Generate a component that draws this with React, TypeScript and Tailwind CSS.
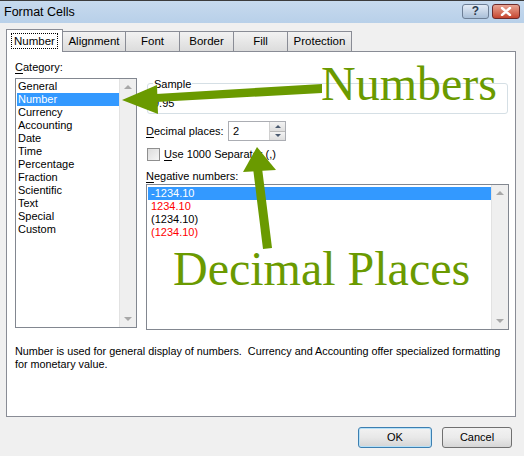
import React from "react";

const categories = [
  "General",
  "Number",
  "Currency",
  "Accounting",
  "Date",
  "Time",
  "Percentage",
  "Fraction",
  "Scientific",
  "Text",
  "Special",
  "Custom",
];

const tabs = ["Number", "Alignment", "Font", "Border", "Fill", "Protection"];
const tabWidths = ["w-[57px]", "w-[64px]", "w-[55px]", "w-[55px]", "w-[55px]", "w-[65px]"];

const negatives = [
  { text: "-1234.10", cls: "bg-[#3399ff] text-white" },
  { text: "1234.10", cls: "text-[#ff0000]" },
  { text: "(1234.10)", cls: "text-black" },
  { text: "(1234.10)", cls: "text-[#ff0000]" },
];

function ScrollBar() {
  return (
    <div className="w-[17px] self-stretch bg-[#efefef] border-l border-[#e2e2e2] flex flex-col justify-between items-center py-[6px]">
      <div className="w-0 h-0 border-l-[4px] border-r-[4px] border-b-[4px] border-l-transparent border-r-transparent border-b-[#a8a8a8]" />
      <div className="w-0 h-0 border-l-[4px] border-r-[4px] border-t-[4px] border-l-transparent border-r-transparent border-t-[#a8a8a8]" />
    </div>
  );
}

export default function App() {
  return (
    <div
      className="relative w-[524px] h-[456px] overflow-hidden bg-[#f0f0f0] text-[11px] text-black"
      style={{ fontFamily: '"Liberation Sans", Arial, sans-serif' }}
    >
      {/* Title bar */}
      <div className="h-[23px] border-t border-[#3c3c3c] bg-gradient-to-b from-[#c7daee] to-[#b8d0e9] flex items-center justify-between pl-[4px] pr-[4px]">
        <span className="text-[12.5px] text-black">Format Cells</span>
        <div className="flex gap-[3px] mt-[-2px]">
          <div className="w-[27px] h-[15px] rounded-[3px] border border-[#6d7f96] bg-gradient-to-b from-[#e3ecf6] to-[#a9bfd8] flex items-center justify-center text-[12px] font-bold text-[#2b3a4d] leading-none">
            ?
          </div>
          <div className="w-[28px] h-[15px] rounded-[3px] border border-[#6d2b2b] bg-gradient-to-b from-[#e8a493] to-[#c4442f] flex items-center justify-center">
            <svg width="12" height="9" viewBox="0 0 12 9">
              <path d="M2 1 L10 8 M10 1 L2 8" stroke="#ffffff" strokeWidth="2.4" strokeLinecap="round" />
            </svg>
          </div>
        </div>
      </div>

      {/* Tabs */}
      <div className="flex items-end pl-[6px] mt-[6px] h-[22px] text-[11.5px]">
        {tabs.map((t, i) =>
          i === 0 ? (
            <div
              key={t}
              className={`${tabWidths[i]} h-[23px] -mb-px relative z-10 bg-white border border-b-0 border-[#898c95] flex items-center justify-center`}
            >
              <span className="border border-dotted border-black px-[2px] leading-[14px]">{t}</span>
            </div>
          ) : (
            <div
              key={t}
              className={`${tabWidths[i]} h-[20px] -ml-px bg-gradient-to-b from-[#f2f2f2] to-[#dcdcdc] border border-b-0 border-[#898c95] flex items-center justify-center`}
            >
              {t}
            </div>
          )
        )}
      </div>

      {/* Panel */}
      <div className="ml-[6px] w-[510px] h-[366px] bg-white border border-[#898c95] pl-[8px] pr-[4px] pt-[7px]">
        <div className="flex">
          {/* Category */}
          <div className="w-[122px]">
            <div className="h-[16px] leading-[16px]">
              <span className="underline underline-offset-2">C</span>ategory:
            </div>
            <div className="mt-[3px] h-[250px] border border-[#828790] flex">
              <div className="flex-1 pt-[1px] pl-[1px]">
                {categories.map((c, i) => (
                  <div
                    key={c}
                    className={`h-[13px] leading-[13px] pl-[1px] ${i === 1 ? "bg-[#3399ff] text-white" : ""}`}
                  >
                    {c}
                  </div>
                ))}
              </div>
              <ScrollBar />
            </div>
          </div>

          {/* Right side */}
          <div className="ml-[9px] w-[362px]">
            <div className="relative mt-[24px] h-[31px] border border-[#d5dfe5] rounded-[3px] ml-[1px]">
              <span className="absolute left-[5px] top-[-8px] bg-white px-[1px] leading-[16px]">Sample</span>
              <div className="pl-[5px] pt-[12px] leading-[14px]">9.95</div>
            </div>

            <div className="flex items-center mt-[7px] h-[20px]">
              <span className="w-[82px] whitespace-nowrap">
                <span className="underline underline-offset-2">D</span>ecimal places:
              </span>
              <div className="w-[58px] h-[20px] border border-[#abadb3] flex">
                <div className="flex-1 pl-[4px] leading-[18px]">2</div>
                <div className="w-[16px] flex flex-col border-l border-[#d0d0d0]">
                  <div className="flex-1 bg-gradient-to-b from-[#f3f3f3] to-[#dedede] border-b border-[#b9b9b9] flex items-center justify-center">
                    <div className="w-0 h-0 border-l-[3px] border-r-[3px] border-b-[3px] border-l-transparent border-r-transparent border-b-[#4a5a70]" />
                  </div>
                  <div className="flex-1 bg-gradient-to-b from-[#f3f3f3] to-[#dedede] flex items-center justify-center">
                    <div className="w-0 h-0 border-l-[3px] border-r-[3px] border-t-[3px] border-l-transparent border-r-transparent border-t-[#4a5a70]" />
                  </div>
                </div>
              </div>
            </div>

            <div className="flex items-center mt-[6px] h-[14px]">
              <div className="w-[13px] h-[13px] border border-[#8f8f8f] bg-gradient-to-br from-[#dcdcdc] to-[#f6f6f6] ml-[1px]" />
              <span className="ml-[4px] whitespace-nowrap">
                <span className="underline underline-offset-2">U</span>se 1000 Separator (,)
              </span>
            </div>

            <div className="mt-[7px] h-[16px] leading-[16px]">
              <span className="underline underline-offset-2">N</span>egative numbers:
            </div>

            <div className="h-[146px] w-[363px] border border-[#828790] flex">
              <div className="flex-1 pt-[2px] pl-[1px]">
                {negatives.map((n, i) => (
                  <div key={i} className={`h-[13px] leading-[13px] pl-[3px] ${n.cls}`}>
                    {n.text}
                  </div>
                ))}
              </div>
              <ScrollBar />
            </div>
          </div>
        </div>

        <div className="mt-[15px] leading-[13px] whitespace-nowrap text-[10.8px]">
          Number is used for general display of numbers.&nbsp; Currency and Accounting offer specialized formatting
          <br />
          for monetary value.
        </div>
      </div>

      {/* Buttons */}
      <div className="flex justify-end gap-[10px] pr-[12px] mt-[10px]">
        <button className="w-[74px] h-[21px] rounded-[3px] border border-[#3c7fb1] bg-gradient-to-b from-[#f2f2f2] via-[#e8e8e8] to-[#d4d4d4] shadow-[inset_0_0_0_1px_#b6e0f7]">
          OK
        </button>
        <button className="w-[70px] h-[21px] rounded-[3px] border border-[#707070] bg-gradient-to-b from-[#f2f2f2] via-[#ebebeb] to-[#d6d6d6]">
          Cancel
        </button>
      </div>

      {/* Annotation overlays */}
      <svg className="absolute left-0 top-0 pointer-events-none" width="524" height="456" viewBox="0 0 524 456">
        <polygon points="322,84 322,93 156,102 156,94" fill="#6a9a00" />
        <polygon points="122,100 157,85 158,114" fill="#6a9a00" />
        <polygon points="253,168 262,168 272,248 263,249" fill="#6a9a00" />
        <polygon points="257,147 243,172 276,170" fill="#6a9a00" />
      </svg>
      <span
        className="absolute left-[321px] top-[60px] text-[48px] leading-[48px] text-[#6a9a00] pointer-events-none"
        style={{ fontFamily: '"Liberation Serif", "Times New Roman", serif' }}
      >
        Numbers
      </span>
      <span
        className="absolute left-[173px] top-[245px] text-[48px] leading-[48px] text-[#6a9a00] pointer-events-none whitespace-nowrap"
        style={{ fontFamily: '"Liberation Serif", "Times New Roman", serif' }}
      >
        Decimal Places
      </span>
    </div>
  );
}
